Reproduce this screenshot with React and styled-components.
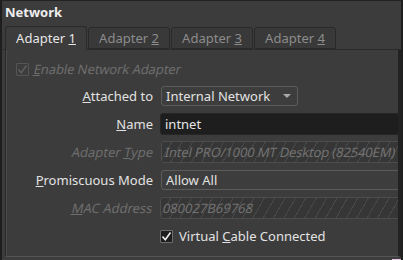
import React from "react";
import styled, { createGlobalStyle } from "styled-components";

const Global = createGlobalStyle`
  html, body { margin: 0; padding: 0; background: #1f1f1f; }
  body { width: 403px; height: 260px; overflow: hidden; }
  * { box-sizing: border-box; }
`;

const Window = styled.div`
  position: relative;
  width: 403px;
  height: 260px;
  background: #3c3c3c;
  border-top: 1px solid #222;
  border-left: 2px solid #1e1e1e;
  border-right: 2px solid #1e1e1e;
  font-family: "Noto Sans", "DejaVu Sans", sans-serif;
  font-size: 13px;
  color: #e2e2e2;
  display: flex;
  flex-direction: column;
  overflow: hidden;
`;

const Corner = styled.div`
  position: absolute;
  right: -2px;
  bottom: 0;
  width: 11px;
  height: 11px;
  border-right: 2px solid #e8c6e6;
  border-bottom: 1px solid #e8c6e6;
`;

const Title = styled.div`
  font-weight: bold;
  line-height: 16px;
  padding: 3px 0 0 3px;
  height: 26px;
  color: #eeeeee;
`;

const TabBar = styled.div`
  display: flex;
  align-items: flex-end;
  gap: 1px;
  padding-left: 3px;
  height: 23px;
  border-bottom: 1px solid #2a2a2a;
`;

const Tab = styled.div`
  width: 82px;
  height: ${(p) => (p.$active ? "24px" : "22px")};
  margin-bottom: ${(p) => (p.$active ? "-1px" : "0")};
  display: flex;
  align-items: center;
  justify-content: center;
  padding-bottom: ${(p) => (p.$active ? "1px" : "0")};
  background: ${(p) => (p.$active ? "#3c3c3c" : "#393939")};
  border: 1px solid #2a2a2a;
  border-bottom: ${(p) => (p.$active ? "none" : "1px solid #2a2a2a")};
  border-radius: 3px 3px 0 0;
  color: ${(p) => (p.$active ? "#e6e6e6" : "#8c8c8c")};
  line-height: 16px;
`;

const Pane = styled.div`
  flex: 1;
  margin-left: 3px;
  margin-bottom: 3px;
  border-left: 1px solid #2a2a2a;
  border-right: 3px solid #222;
  border-bottom: 1px solid #555;
  box-shadow: inset 1px 0 0 #4a4a4a;
  padding-top: 8px;
  display: flex;
  flex-direction: column;
  gap: 5px;
  overflow: hidden;
`;

const Oblique = styled.span`
  display: inline-block;
  transform: skewX(-12deg);
  letter-spacing: ${(p) => p.$ls || 0}px;
`;

const CheckRow = styled.label`
  display: flex;
  align-items: center;
  gap: ${(p) => p.$gap || 6}px;
  height: ${(p) => p.$h || 22}px;
  padding-left: ${(p) => p.$indent || 0}px;
  color: ${(p) => (p.$disabled ? "#6e6e6e" : "#e2e2e2")};
  white-space: nowrap;
`;

const Box = styled.span`
  width: 13px;
  height: 13px;
  flex: none;
  border: 1px solid ${(p) => (p.$disabled ? "#555" : "#6e6e6e")};
  background: ${(p) => (p.$disabled ? "transparent" : "#1e1e1e")};
  border-radius: 1px;
  display: flex;
  align-items: center;
  justify-content: center;
`;

const Form = styled.div`
  display: grid;
  grid-template-columns: 147px 250px;
  grid-auto-rows: 22px;
  column-gap: 7px;
  row-gap: 6px;
  align-items: center;
`;

const Label = styled.div`
  text-align: right;
  white-space: nowrap;
  color: ${(p) => (p.$disabled ? "#6e6e6e" : "#e2e2e2")};
`;

const Combo = styled.div`
  margin: 1px;
  height: 20px;
  width: ${(p) => p.$w || "auto"};
  border: 1px solid #5c5c5c;
  border-radius: 3px;
  background: #3d3d3d;
  display: flex;
  align-items: center;
  padding: 0 5px 0 4px;
  white-space: nowrap;
  color: #e2e2e2;
`;

const ComboText = styled.span`
  flex: 1;
`;

const Arrow = styled.span`
  width: 0;
  height: 0;
  border-left: 4px solid transparent;
  border-right: 4px solid transparent;
  border-top: 4px solid #a8a8a8;
  margin-right: 1px;
`;

const Input = styled.div`
  height: 22px;
  background: #1e1e1e;
  border: 1px solid #262626;
  border-radius: 3px;
  padding-left: 4px;
  display: flex;
  align-items: center;
  color: #e6e6e6;
`;

const Disabled = styled.div`
  height: 22px;
  margin-left: ${(p) => (p.$inset ? 1 : 0)}px;
  border: 1px solid #4c4c4c;
  border-radius: 3px;
  background-color: #363636;
  background-image: repeating-linear-gradient(
    120deg,
    transparent 0 8px,
    #484848 8px 9px
  );
  display: flex;
  align-items: center;
  padding-left: ${(p) => p.$pad || 4}px;
  color: #727272;
  white-space: nowrap;
`;

const Check = ({ color }) => (
  <svg width="11" height="11" viewBox="0 0 11 11">
    <path d="M1.5 5.5 L4.3 8.8 L9.5 1.5" fill="none" stroke={color} strokeWidth="1.6" />
  </svg>
);

export default function App() {
  return (
    <>
      <Global />
      <Window>
        <Title>Network</Title>
        <TabBar>
          <Tab $active>Adapter&nbsp;<u>1</u></Tab>
          <Tab>Adapter&nbsp;<u>2</u></Tab>
          <Tab>Adapter&nbsp;<u>3</u></Tab>
          <Tab>Adapter&nbsp;<u>4</u></Tab>
        </TabBar>
        <Pane>
          <CheckRow $disabled $indent={10} $gap={5}>
            <Box $disabled>
              <Check color="#5e5e5e" />
            </Box>
            <Oblique $ls={-0.1}><u>E</u>nable Network Adapter</Oblique>
          </CheckRow>
          <Form>
            <Label><u>A</u>ttached to</Label>
            <Combo $w="137px">
              <ComboText>Internal Network</ComboText>
              <Arrow />
            </Combo>
            <Label><u>N</u>ame</Label>
            <Input>intnet</Input>
            <Label $disabled><Oblique>Adapter <u>T</u>ype</Oblique></Label>
            <Disabled $inset $pad={3}>
              <Oblique $ls={-0.15}>Intel PRO/1000 MT Desktop (82540EM)</Oblique>
            </Disabled>
            <Label><u>P</u>romiscuous Mode</Label>
            <Combo>
              <ComboText>Allow All</ComboText>
            </Combo>
            <Label $disabled><Oblique><u>M</u>AC Address</Oblique></Label>
            <Disabled $pad={2}>
              <Oblique>080027B69768</Oblique>
            </Disabled>
            <span />
            <CheckRow $h={19}>
              <Box>
                <Check color="#f0f0f0" />
              </Box>
              <span>Virtual <u>C</u>able Connected</span>
            </CheckRow>
          </Form>
        </Pane>
        <Corner />
      </Window>
    </>
  );
}
